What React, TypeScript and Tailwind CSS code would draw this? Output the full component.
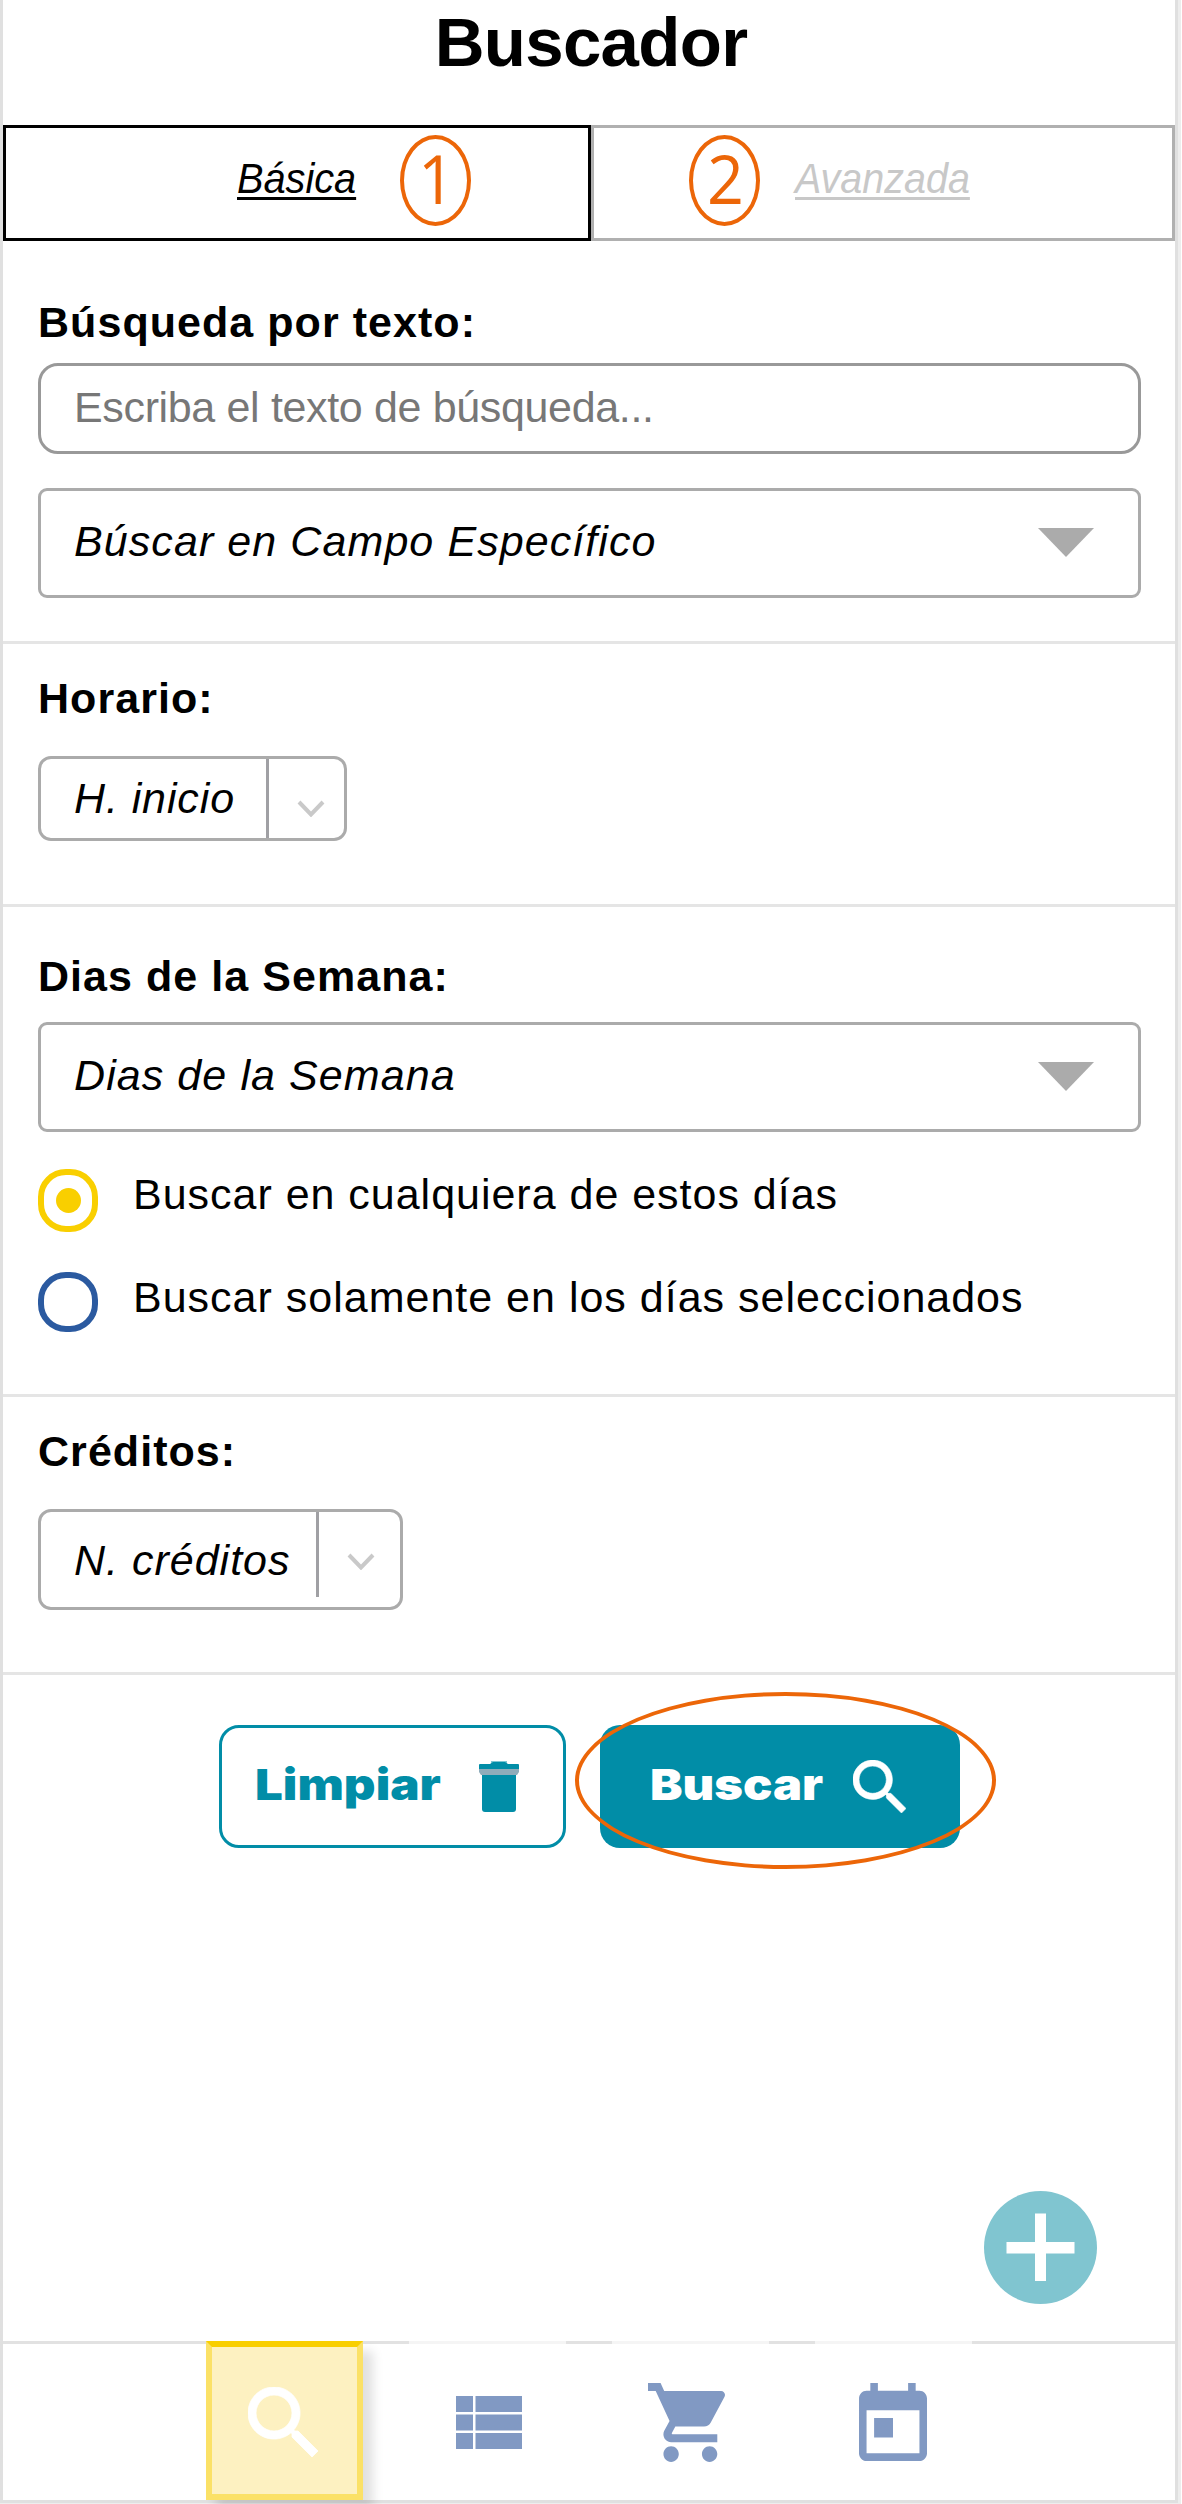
import React from "react";

const SEARCH_PATH =
  "M15.5 14h-.79l-.28-.27C15.41 12.59 16 11.11 16 9.5 16 5.91 13.09 3 9.5 3S3 5.91 3 9.5 5.91 16 9.5 16c1.61 0 3.09-.59 4.23-1.57l.27.28v.79l5 4.99L20.49 19l-4.99-5zm-6 0C7.01 14 5 11.99 5 9.5S7.01 5 9.5 5 14 7.01 14 9.5 11.99 14 9.5 14z";

function SearchIcon({ className }: { className: string }) {
  return (
    <svg viewBox="3 3 17.49 17.49" preserveAspectRatio="none" fill="currentColor" stroke="currentColor" strokeWidth="0.2" className={className}>
      <path d={SEARCH_PATH} />
    </svg>
  );
}

function TrashIcon() {
  return (
    <svg viewBox="0 0 42 54" className="h-[54px] w-[42px]">
      <path d="M13 1h16v4H13z" fill="#018da7" opacity="0.5" />
      <path d="M1 9V5q0-1 1-1h10l3-2h12l3 2h10q1 0 1 1v4z" fill="#018da7" />
      <path d="M1 9h40v3l-2 3H3l-2-3z" fill="#8facba" />
      <path d="M4 15h34v34q0 3-3 3H7q-3 0-3-3z" fill="#018da7" />
    </svg>
  );
}

function Chevron({ className }: { className: string }) {
  return (
    <svg viewBox="0 0 28 17" fill="none" className={className}>
      <path d="M2 2l12 12.5L26 2" stroke="#c9c9c9" strokeWidth="4" />
    </svg>
  );
}

function Triangle() {
  return (
    <svg viewBox="0 0 56 29" className="mr-[44px] h-[29px] w-[56px]">
      <path d="M0 0h56L28 29z" fill="#ababab" />
    </svg>
  );
}

function Heading({ className, children }: { className: string; children: React.ReactNode }) {
  return (
    <h2 className={`h-[48px] whitespace-nowrap text-[43px] leading-[48px] font-bold tracking-[1.05px] ${className}`}>
      {children}
    </h2>
  );
}

function WideSelect({ label, className }: { label: string; className: string }) {
  return (
    <div
      className={`flex h-[110px] w-[1103px] items-start justify-between rounded-[9px] border-[3px] border-[#ababab] pl-[33px] ${className}`}
    >
      <span className="mt-[26px] h-[48px] whitespace-nowrap text-[43px] leading-[48px] italic tracking-[1.08px]">{label}</span>
      <span className="mt-[37px] block">
        <Triangle />
      </span>
    </div>
  );
}

function StepMark({ n, className }: { n: string; className: string }) {
  return (
    <span
      className={`absolute top-[10px] flex h-[91px] w-[71px] items-center justify-center rounded-[50%] border-[4px] border-[#ec6608] pb-[6px] pl-[2px] font-['Open_Sans'] text-[68px] leading-[80px] font-medium text-[#ec6608] ${className}`}
    >
      <span className="block scale-x-[0.95]">{n}</span>
    </span>
  );
}

function NavSlot({ className, children }: { className: string; children: React.ReactNode }) {
  return (
    <button className={`relative -mt-[3px] h-[159px] w-[157px] shrink-0 border-t-[3px] border-[#f5f5f5] bg-white ${className}`}>
      {children}
    </button>
  );
}

export default function App() {
  return (
    <div className="h-[2504px] w-[1182px] overflow-hidden bg-white font-['Liberation_Sans',sans-serif] text-black">
      <div className="flex h-[2504px] w-[1181px] border-r-[3px] border-b border-[#ededed]">
        <main className="flex w-[1178px] flex-col border-r-[3px] border-b-[3px] border-l-[3px] border-[#e0e0e0] bg-white">
          <h1 className="mt-[4px] h-[77px] pl-[4px] text-center text-[69px] leading-[77px] font-bold tracking-[-0.7px]">Buscador</h1>

          <nav className="mt-[44px] flex h-[116px] shrink-0">
            <div className="relative flex w-[588px] border-[3px] border-black">
              <span className="mt-[28px] ml-[231px] h-[46px] origin-left scale-x-[0.945] text-[42px] leading-[46px] italic underline decoration-[3px] underline-offset-[4px] [text-decoration-skip-ink:none]">
                Básica
              </span>
              <StepMark n="1" className="-mt-[3px] left-[394px]" />
            </div>
            <div className="relative flex w-[584px] border-[3px] border-[#b0b0b0]">
              <StepMark n="2" className="-mt-[3px] left-[95px]" />
              <span className="mt-[28px] ml-[201px] h-[46px] origin-left scale-x-[0.94] text-[42px] leading-[46px] text-[#c8c8c8] italic underline decoration-[3px] underline-offset-[4px] [text-decoration-skip-ink:none]">
                Avanzada
              </span>
            </div>
          </nav>

          <section className="h-[403px] shrink-0 border-b-[3px] border-[#e5e5e5] pl-[35px]">
            <Heading className="mt-[57px]">Búsqueda por texto:</Heading>
            <input
              placeholder="Escriba el texto de búsqueda..."
              className="mt-[17px] block h-[91px] w-[1103px] rounded-[20px] border-[3px] border-[#999] pb-[3px] pl-[33px] text-[43px] leading-[48px] tracking-[-0.35px] placeholder:text-[#777]"
            />
            <WideSelect label="Búscar en Campo Específico" className="mt-[34px]" />
          </section>

          <section className="h-[263px] shrink-0 border-b-[3px] border-[#e5e5e5] pl-[35px]">
            <Heading className="mt-[30px]">Horario:</Heading>
            <div className="mt-[34px] flex h-[85px] w-[309px] rounded-[13px] border-[3px] border-[#ababab]">
              <span className="mt-[15px] w-[225px] pl-[33px] text-[43px] leading-[48px] whitespace-nowrap italic tracking-[0.9px]">
                H. inicio
              </span>
              <span className="h-full w-[3px] bg-[#a0a0a4]" />
              <Chevron className="mt-[41px] ml-[28px] h-[17px] w-[28px]" />
            </div>
          </section>

          <section className="h-[490px] shrink-0 border-b-[3px] border-[#e5e5e5] pl-[35px]">
            <Heading className="mt-[45px]">Dias de la Semana:</Heading>
            <WideSelect label="Dias de la Semana" className="mt-[22px]" />
            <label className="mt-[37px] flex h-[63px]">
              <span className="flex h-[63px] w-[60px] items-center justify-center rounded-[28px] border-[6px] border-[#f9cf00]">
                <span className="h-[25px] w-[25px] rounded-full bg-[#f9cf00]" />
              </span>
              <span className="mt-[1px] ml-[35px] text-[43px] leading-[48px] whitespace-nowrap tracking-[0.98px]">
                Buscar en cualquiera de estos días
              </span>
            </label>
            <label className="mt-[40px] flex h-[60px]">
              <span className="h-[60px] w-[60px] rounded-[28px] border-[6px] border-[#2b5aa0]" />
              <span className="mt-[1px] ml-[35px] text-[43px] leading-[48px] whitespace-nowrap tracking-[1px]">
                Buscar solamente en los días seleccionados
              </span>
            </label>
          </section>

          <section className="h-[278px] shrink-0 border-b-[3px] border-[#e5e5e5] pl-[35px]">
            <Heading className="mt-[30px]">Créditos:</Heading>
            <div className="mt-[34px] flex h-[101px] w-[365px] rounded-[13px] border-[3px] border-[#ababab]">
              <span className="mt-[24px] w-[275px] pl-[33px] text-[43px] leading-[48px] whitespace-nowrap italic tracking-[1px]">
                N. créditos
              </span>
              <span className="h-[85px] w-[3px] bg-[#a0a0a4]" />
              <Chevron className="mt-[41px] ml-[28px] h-[17px] w-[28px]" />
            </div>
          </section>

          <div className="mt-[50px] flex h-[123px] shrink-0 pl-[216px] font-['Inter','Liberation_Sans',sans-serif] text-[43px] leading-[48px] font-black">
            <button className="flex h-[123px] w-[347px] items-start rounded-[20px] border-[3px] border-[#018da7] text-[#018da7]">
              <span className="mt-[32px] ml-[33px] w-[223px] origin-left scale-x-[1.145] text-left">Limpiar</span>
              <span className="mt-[32px] block">
                <TrashIcon />
              </span>
            </button>
            <button className="relative ml-[34px] flex h-[123px] w-[360px] items-start rounded-[20px] bg-[#018da7] text-white">
              <span className="mt-[35px] ml-[50px] w-[203px] origin-left scale-x-[1.135] text-left">Buscar</span>
              <SearchIcon className="mt-[35px] h-[53px] w-[53px]" />
              <span className="absolute -top-[33px] -left-[25px] h-[177px] w-[421px] rounded-[50%] border-[4px] border-[#ec6608]" />
            </button>
          </div>

          <div className="mt-[343px] flex h-[113px] shrink-0 justify-end pr-[78px]">
            <button className="h-[113px] w-[113px] rounded-full bg-[#80c5d0]">
              <svg viewBox="0 0 113 113" className="h-[113px] w-[113px]">
                <path d="M22.500 51h28.500V22.500h11V51h28.500v11.500H62V90H51V62.500H22.500z" fill="#fff" />
              </svg>
            </button>
          </div>

          <footer className="mt-[37px] flex h-[159px] shrink-0 border-t-[3px] border-[#e2e2e2] pl-[203px]">
            <button className="-mt-[3px] h-[159px] w-[157px] shrink-0 border-[6px] border-[#fbe167] border-t-[#f9cf00] bg-[#fdf1c1] text-white shadow-[10px_10px_10px_rgba(0,0,0,0.12)]">
              <SearchIcon className="mt-[2px] ml-[36px] h-[70px] w-[70px]" />
            </button>
            <NavSlot className="ml-[46px]">
              <svg viewBox="0 0 66 53" className="ml-[47px] h-[53px] w-[66px]">
                <path
                  d="M0 0h17v16H0zM19.500 0H66v16H19.500zM0 18.500h17v16H0zM19.500 18.500H66v16H19.500zM0 37h17v16H0zM19.500 37H66v16H19.500z"
                  fill="#8199c3"
                />
              </svg>
            </NavSlot>
            <NavSlot className="ml-[46px]">
              <svg viewBox="1 2 20 20" preserveAspectRatio="none" className="ml-[36px] h-[79px] w-[77px]">
                <path
                  fill="#8199c3"
                  d="M7 18c-1.100 0-1.990.9-1.990 2S5.900 22 7 22s2-.9 2-2-.9-2-2-2zM1 2v2h2l3.600 7.590-1.350 2.450c-.16.28-.25.61-.25.960 0 1.100.9 2 2 2h12v-2H7.420c-.14 0-.25-.11-.25-.25l.03-.12.9-1.630h7.450c.75 0 1.410-.41 1.750-1.030l3.580-6.490c.08-.14.12-.31.12-.48 0-.55-.45-1-1-1H5.210l-.94-2H1zm16 16c-1.100 0-1.990.9-1.990 2s.89 2 1.990 2 2-.9 2-2-.9-2-2-2z"
                />
              </svg>
            </NavSlot>
            <NavSlot className="ml-[46px]">
              <svg viewBox="3 1 18 20" preserveAspectRatio="none" className="ml-[44px] h-[78px] w-[68px]">
                <path
                  fill="#8199c3"
                  d="M19 3h-1V1h-2v2H8V1H6v2H5c-1.110 0-1.990.9-1.990 2L3 19c0 1.100.89 2 2 2h14c1.100 0 2-.9 2-2V5c0-1.100-.9-2-2-2zm0 16H5V8h14v11zM7 10h5v5H7z"
                />
              </svg>
            </NavSlot>
          </footer>
        </main>
      </div>
    </div>
  );
}
